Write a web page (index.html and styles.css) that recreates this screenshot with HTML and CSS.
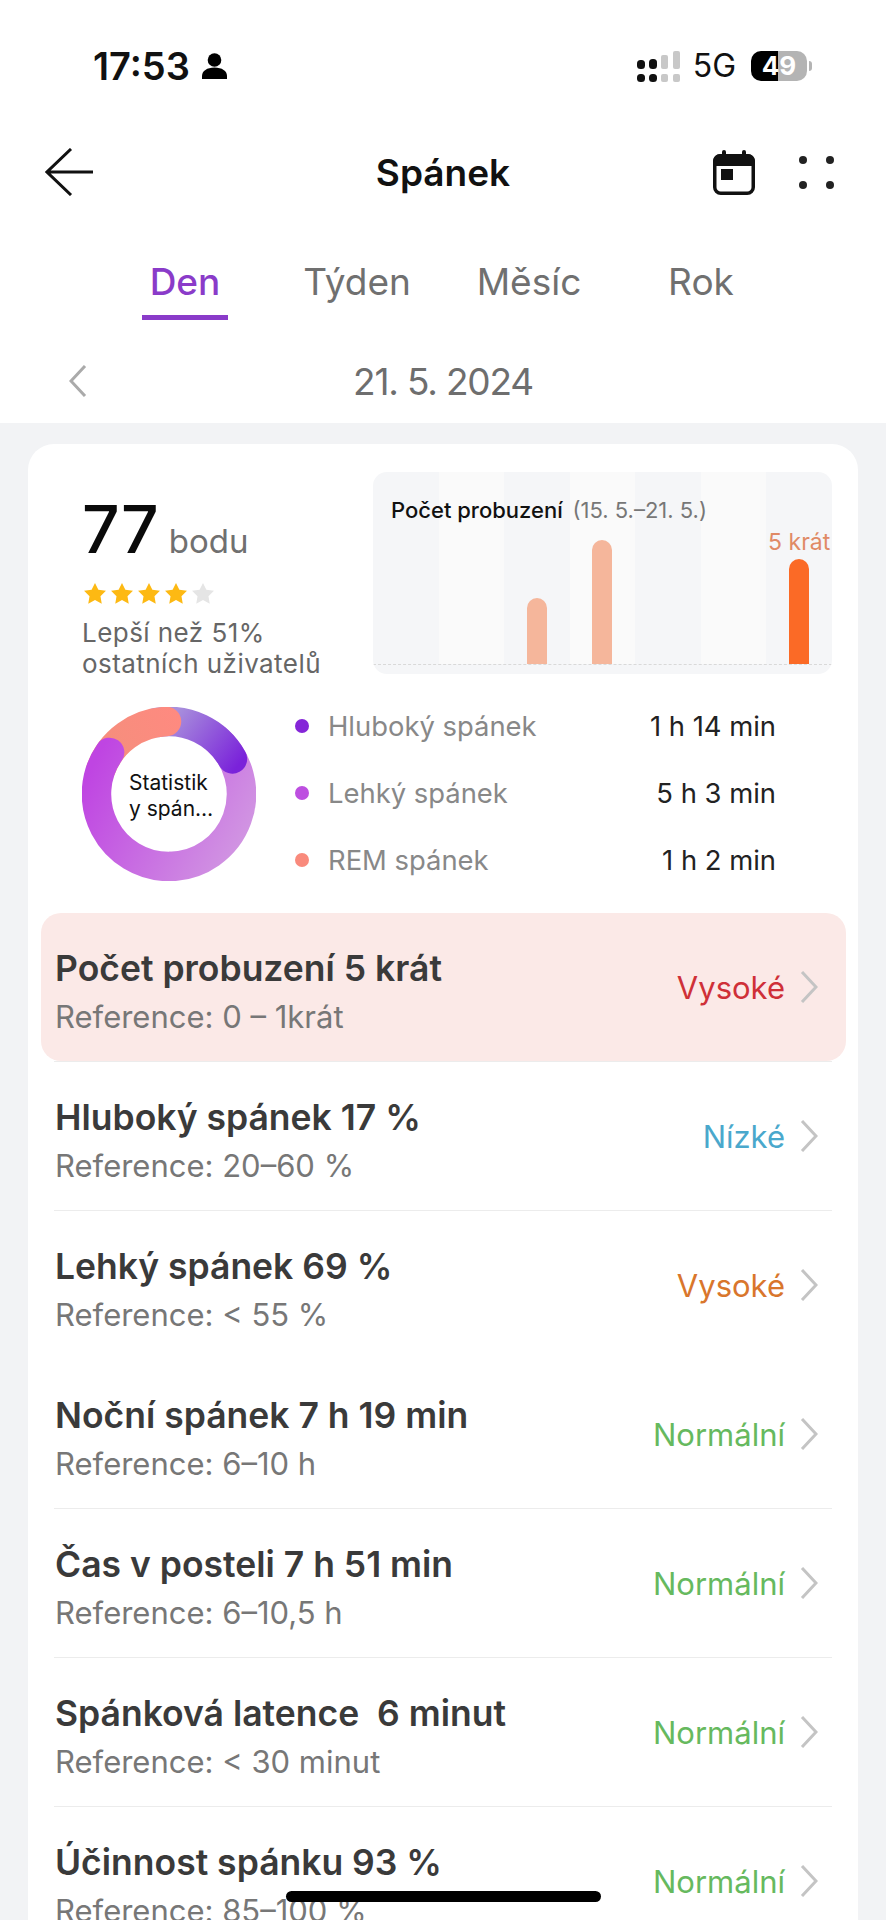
FILE: index.html
```html
<!DOCTYPE html>
<html lang="cs">
<head>
<meta charset="utf-8">
<title>Spánek</title>
<link rel="stylesheet" href="styles.css">
</head>
<body>
<div class="screen">
  <header class="head">
    <div class="status">
      <div class="status-left">
        <span class="time">17:53</span>
        <svg class="person" viewBox="0 0 25 26"><circle cx="12.5" cy="7" r="6.8"/><path d="M0 26v-3c0-5 5-8.5 12.5-8.5S25 18 25 23v3z"/></svg>
      </div>
      <div class="status-right">
        <svg class="signal" viewBox="0 0 43 31">
          <rect x="0" y="9" width="8" height="9" rx="3.5"/><rect x="0" y="23" width="8" height="8" rx="3.5"/>
          <rect x="12" y="8" width="8" height="10" rx="3.5"/><rect x="12" y="23" width="8" height="8" rx="3.5"/>
          <g class="signal-off"><rect x="24" y="4" width="7" height="14" rx="2"/><rect x="24" y="23" width="7" height="8" rx="2"/><rect x="36" y="0" width="7" height="18" rx="2"/><rect x="36" y="23" width="7" height="8" rx="2"/></g>
        </svg>
        <span class="net">5G</span>
        <span class="battery">49</span>
      </div>
    </div>
    <nav class="nav">
      <svg class="back" viewBox="0 0 48 48"><path d="M26 1 2 24l24 23M2 24h46"/></svg>
      <h1 class="title">Spánek</h1>
      <div class="nav-actions">
        <svg class="cal" viewBox="0 0 42 45">
          <rect class="cal-body" x="1.75" y="5.75" width="38.5" height="37.5" rx="6"/>
          <path d="M7 4h28a7 7 0 0 1 7 7v5H0v-5a7 7 0 0 1 7-7z"/>
          <rect x="9" y="0" width="4" height="8" rx="2"/><rect x="29" y="0" width="4" height="8" rx="2"/>
          <rect x="8" y="19" width="12" height="11"/>
        </svg>
        <svg class="more" viewBox="0 0 35 33"><circle cx="4" cy="4" r="4"/><circle cx="31" cy="4" r="4"/><circle cx="4" cy="29" r="4"/><circle cx="31" cy="29" r="4"/></svg>
      </div>
    </nav>
    <div class="tabs">
      <div class="tab tab-active"><span>Den</span></div>
      <div class="tab">Týden</div>
      <div class="tab">Měsíc</div>
      <div class="tab">Rok</div>
    </div>
    <div class="date-row">
      <svg class="date-prev" viewBox="0 0 18 32"><path d="M16 1 2 16l14 15"/></svg>
      <span class="date">21. 5. 2024</span>
    </div>
  </header>

  <main class="card">
    <section class="top">
      <div class="score">
        <div class="score-line"><span class="score-num">77</span><span class="score-unit">bodu</span></div>
        <div class="stars">
          <svg class="star" viewBox="0 0 24 23"><path d="M12 0l3.700 7.400 8.300 1.200-6 5.800 1.400 8.200-7.400-3.900-7.400 3.900 1.400-8.200-6-5.800 8.300-1.200z"/></svg>
          <svg class="star" viewBox="0 0 24 23"><path d="M12 0l3.700 7.400 8.300 1.200-6 5.800 1.400 8.200-7.400-3.900-7.400 3.900 1.400-8.200-6-5.800 8.300-1.200z"/></svg>
          <svg class="star" viewBox="0 0 24 23"><path d="M12 0l3.700 7.400 8.300 1.200-6 5.800 1.400 8.200-7.400-3.900-7.400 3.900 1.400-8.200-6-5.800 8.300-1.200z"/></svg>
          <svg class="star" viewBox="0 0 24 23"><path d="M12 0l3.700 7.400 8.300 1.200-6 5.800 1.400 8.200-7.400-3.900-7.400 3.900 1.400-8.200-6-5.800 8.300-1.200z"/></svg>
          <svg class="star star-off" viewBox="0 0 24 23"><path d="M12 0l3.700 7.400 8.300 1.200-6 5.800 1.400 8.200-7.400-3.900-7.400 3.900 1.400-8.200-6-5.800 8.300-1.200z"/></svg>
        </div>
        <p class="better">Lepší než 51%<br>ostatních uživatelů</p>
      </div>
      <div class="chart">
        <div class="chart-title">Počet probuzení <span class="chart-range">(15. 5.–21. 5.)</span></div>
        <div class="plot">
          <div class="col"></div>
          <div class="col"></div>
          <div class="col"><div class="bar" style="height:66px"></div></div>
          <div class="col"><div class="bar" style="height:124px"></div></div>
          <div class="col"></div>
          <div class="col"></div>
          <div class="col"><span class="bar-label">5 krát</span><div class="bar bar-now" style="height:105px"></div></div>
        </div>
      </div>
    </section>

    <section class="stats">
      <div class="donut">
        <svg class="donut-svg" viewBox="0 0 174 174">
          <defs>
            <linearGradient id="gLight" gradientUnits="userSpaceOnUse" x1="15" y1="50" x2="165" y2="130"><stop offset="0" stop-color="#bf45e2"/><stop offset="1" stop-color="#d195e2"/></linearGradient>
            <linearGradient id="gDeep" gradientUnits="userSpaceOnUse" x1="90" y1="10" x2="155" y2="60"><stop offset="0" stop-color="#a88fdc"/><stop offset="1" stop-color="#7a22da"/></linearGradient>
            <linearGradient id="gRem" gradientUnits="userSpaceOnUse" x1="20" y1="60" x2="100" y2="15"><stop offset="0" stop-color="#f48f7c"/><stop offset="1" stop-color="#fe8a80"/></linearGradient>
          </defs>
          <path class="seg seg-a" d="M133.600 31.500A72.500 72.500 0 0 1 87 159.500"/>
          <path class="seg seg-deep" d="M74.400 15.600A72.500 72.500 0 0 1 150.400 51.900"/>
          <path class="seg seg-rem" d="M18.900 62.200A72.500 72.500 0 0 1 84.500 14.500"/>
          <path class="seg seg-b" d="M87 159.500A72.500 72.500 0 0 1 27.600 45.400"/>
        </svg>
        <div class="donut-label">Statistik<br>y spán…</div>
      </div>
      <ul class="legend">
        <li class="legend-row"><i class="dot dot-deep"></i><span class="legend-name">Hluboký spánek</span><span class="legend-val">1 h 14 min</span></li>
        <li class="legend-row"><i class="dot dot-light"></i><span class="legend-name">Lehký spánek</span><span class="legend-val">5 h 3 min</span></li>
        <li class="legend-row"><i class="dot dot-rem"></i><span class="legend-name">REM spánek</span><span class="legend-val">1 h 2 min</span></li>
      </ul>
    </section>

    <section class="list">
      <div class="row row-alert">
        <div class="row-text"><div class="row-title">Počet probuzení 5 krát</div><div class="row-ref">Reference: 0 – 1krát</div></div>
        <span class="row-state red">Vysoké</span>
        <svg class="chev" viewBox="0 0 18 32"><path d="M2 1l14 15L2 31"/></svg>
      </div>
      <div class="rule"></div>
      <div class="row">
        <div class="row-text"><div class="row-title">Hluboký spánek 17 %</div><div class="row-ref">Reference: 20–60 %</div></div>
        <span class="row-state blue">Nízké</span>
        <svg class="chev" viewBox="0 0 18 32"><path d="M2 1l14 15L2 31"/></svg>
      </div>
      <div class="rule"></div>
      <div class="row">
        <div class="row-text"><div class="row-title">Lehký spánek 69 %</div><div class="row-ref">Reference: &lt; 55 %</div></div>
        <span class="row-state orange">Vysoké</span>
        <svg class="chev" viewBox="0 0 18 32"><path d="M2 1l14 15L2 31"/></svg>
      </div>
      <div class="rule rule-none"></div>
      <div class="row">
        <div class="row-text"><div class="row-title">Noční spánek 7 h 19 min</div><div class="row-ref">Reference: 6–10 h</div></div>
        <span class="row-state green">Normální</span>
        <svg class="chev" viewBox="0 0 18 32"><path d="M2 1l14 15L2 31"/></svg>
      </div>
      <div class="rule"></div>
      <div class="row">
        <div class="row-text"><div class="row-title">Čas v posteli 7 h 51 min</div><div class="row-ref">Reference: 6–10,5 h</div></div>
        <span class="row-state green">Normální</span>
        <svg class="chev" viewBox="0 0 18 32"><path d="M2 1l14 15L2 31"/></svg>
      </div>
      <div class="rule"></div>
      <div class="row">
        <div class="row-text"><div class="row-title">Spánková latence&nbsp; 6 minut</div><div class="row-ref">Reference: &lt; 30 minut</div></div>
        <span class="row-state green">Normální</span>
        <svg class="chev" viewBox="0 0 18 32"><path d="M2 1l14 15L2 31"/></svg>
      </div>
      <div class="rule"></div>
      <div class="row">
        <div class="row-text"><div class="row-title">Účinnost spánku 93 %</div><div class="row-ref">Reference: 85–100 %</div></div>
        <span class="row-state green">Normální</span>
        <svg class="chev" viewBox="0 0 18 32"><path d="M2 1l14 15L2 31"/></svg>
      </div>
    </section>
  </main>
  <div class="home-bar"></div>
</div>
</body>
</html>
```
FILE: styles.css
```css
* { box-sizing: border-box; }
html, body { margin: 0; padding: 0; }
body { font-family: Inter, "Liberation Sans", sans-serif; background: #f2f3f5; color: #333; }
.screen { position: relative; width: 886px; height: 1920px; overflow: hidden; background: #f2f3f5; }
h1, p, ul { margin: 0; padding: 0; }
ul { list-style: none; }

.head { background: #fff; height: 423px; }

.status { display: flex; justify-content: space-between; align-items: center; height: 132px; padding: 40px 79px 40px 93px; }
.status-left, .status-right { display: flex; align-items: center; }
.time { font-size: 38px; font-weight: 600; color: #111; line-height: 1; }
.person { width: 25px; height: 26px; margin-left: 12px; fill: #000; }
.signal { width: 43px; height: 31px; fill: #111; }
.signal-off { fill: #c8c8c8; }
.net { font-size: 32px; color: #111; margin-left: 13px; line-height: 1; }
.battery { position: relative; width: 56px; height: 30px; margin-left: 15px; border-radius: 10px; background: linear-gradient(90deg, #000 27px, #b4b4b4 27px); color: #fff; font-size: 26px; font-weight: 700; line-height: 30px; text-align: center; }
.battery::after { content: ""; position: absolute; right: -5px; top: 10px; width: 3px; height: 10px; border-radius: 0 3px 3px 0; background: #b4b4b4; }

.nav { display: grid; grid-template-columns: 1fr auto 1fr; align-items: center; height: 80px; padding: 0 45px; }
.back { width: 48px; height: 48px; fill: none; stroke: #111; stroke-width: 3; }
.title { font-size: 37px; font-weight: 600; color: #111; line-height: 1; }
.nav-actions { display: flex; justify-content: flex-end; align-items: center; gap: 44px; margin-right: 7px; }
.cal { width: 42px; height: 45px; fill: #111; }
.cal-body { fill: none; stroke: #111; stroke-width: 3.5; }
.more { width: 35px; height: 33px; fill: #222; }

.tabs { display: flex; height: 108px; padding-left: 99px; }
.tab { width: 172px; display: flex; justify-content: center; align-items: flex-end; padding-bottom: 16px; font-size: 37px; color: #707070; line-height: 44px; }
.tab-active { color: #8a3bc9; font-weight: 500; padding-bottom: 0; }
.tab-active span { display: block; width: 86px; text-align: center; border-bottom: 5px solid #8a3bc9; padding-bottom: 11px; }

.date-row { display: flex; align-items: center; justify-content: center; position: relative; height: 84px; margin-top: 19px; }
.date { font-size: 37px; color: #6e6e6e; letter-spacing: -1.2px; }
.date-prev { position: absolute; left: 69px; top: 26px; width: 18px; height: 32px; fill: none; stroke: #aaa; stroke-width: 3; }

.card { margin: 21px 28px 0; background: #fff; border-radius: 26px 26px 0 0; padding-top: 28px; }
.top { display: flex; justify-content: space-between; padding: 0 26px 0 54px; height: 202px; }
.score { padding-top: 23px; }
.score-line { display: flex; align-items: baseline; }
.score-num { font-size: 66px; line-height: 68px; font-weight: 500; color: #0a0a0a; }
.score-unit { font-size: 33px; color: #707070; margin-left: 10px; }
.stars { display: flex; gap: 3px; margin: 20px 0 0 1px; height: 21px; }
.star { width: 24px; height: 21px; fill: #fdb913; }
.star-off { fill: #e5e5e5; }
.better { margin-top: 13px; font-size: 26px; line-height: 31px; color: #666; letter-spacing: .45px; white-space: nowrap; }

.chart { position: relative; width: 459px; height: 202px; background: #f5f6f8; border-radius: 14px; overflow: hidden; }
.chart-title { position: absolute; left: 18px; top: 24px; font-size: 22px; line-height: 28px; font-weight: 500; color: #111; white-space: nowrap; }
.chart-range { font-weight: 400; color: #777; margin-left: 4px; }
.plot { display: grid; grid-template-columns: repeat(7, 1fr); height: 193px; border-bottom: 1px dashed #d9d9d9; }
.col { display: flex; flex-direction: column; align-items: center; justify-content: flex-end; }
.col:nth-child(even) { background: #fafafa; }
.bar { width: 20px; background: #f5b69b; border-radius: 10px 10px 0 0; }
.bar-now { background: #fb6a26; }
.bar-label { font-size: 23px; line-height: 24px; color: #e08a66; margin-bottom: 5px; white-space: nowrap; }

.stats { display: flex; padding-left: 54px; margin-top: 33px; height: 173px; }
.donut { position: relative; width: 174px; height: 174px; flex: none; }
.donut-svg { display: block; width: 174px; height: 174px; }
.seg { fill: none; stroke-width: 29.5; }
.seg-a, .seg-b { stroke: url(#gLight); }
.seg-b { stroke-linecap: round; }
.seg-deep { stroke: url(#gDeep); stroke-linecap: round; }
.seg-rem { stroke: url(#gRem); stroke-linecap: round; }
.donut-label { position: absolute; left: 47px; top: 63px; font-size: 21px; line-height: 26px; color: #111; white-space: nowrap; }

.legend { width: 481px; margin: -1px 0 0 39px; display: flex; flex-direction: column; gap: 27.5px; }
.legend-row { display: flex; align-items: center; height: 40px; font-size: 27.4px; }
.dot { width: 14px; height: 14px; border-radius: 50%; flex: none; }
.dot-deep { background: #8526d8; }
.dot-light { background: #bd4fe0; }
.dot-rem { background: #f98a7c; }
.legend-name { margin-left: 19px; color: #888; }
.legend-val { margin-left: auto; color: #222; }

.list { margin-top: 33px; }
.row { display: flex; align-items: center; height: 148px; margin: 0 12px 0 13px; padding: 0 28px 0 14px; }
.row-alert { background: #fbe9e7; border-radius: 20px; }
.row-text { flex: 1; padding-top: 10.4px; }
.row-title { font-size: 35.5px; line-height: 40px; font-weight: 600; color: #3a3a3a; white-space: nowrap; }
.row-ref { font-size: 31px; line-height: 36px; margin-top: 10.6px; color: #777; white-space: nowrap; }
.row-state { font-size: 31px; }
.red { color: #cf3038; }
.blue { color: #4aa8cc; }
.orange { color: #d9762c; }
.green { color: #66b95e; }
.chev { width: 18px; height: 32px; margin-left: 15px; fill: none; stroke: #c4c4c4; stroke-width: 3; }
.rule { height: 1px; margin: 0 26px; background: #ececec; }
.rule-none { background: transparent; }

.home-bar { position: absolute; left: 286px; top: 1891px; width: 315px; height: 11px; border-radius: 6px; background: #000; }
```
